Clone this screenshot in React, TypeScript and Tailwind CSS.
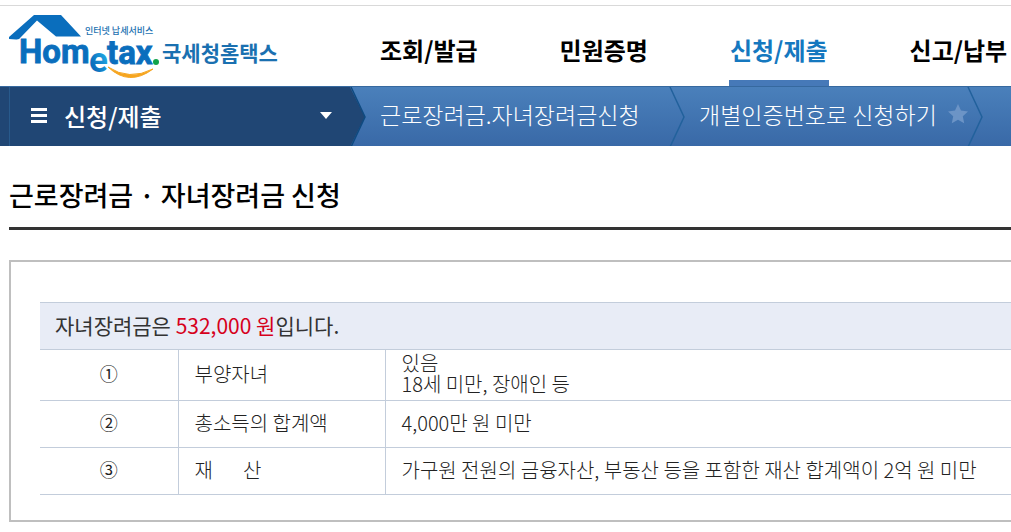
import { ReactNode } from "react";

type MenuItem = {
  label: string;
  active?: boolean;
};

type ConditionRow = {
  no: string;
  name: ReactNode;
  value: ReactNode;
};

const MENU_ITEMS: MenuItem[] = [
  { label: "조회/발급" },
  { label: "민원증명" },
  { label: "신청/제출", active: true },
  { label: "신고/납부" },
];

const CONDITION_ROWS: ConditionRow[] = [
  {
    no: "①",
    name: "부양자녀",
    value: (
      <>
        있음
        <br />
        18세 미만, 장애인 등
      </>
    ),
  },
  { no: "②", name: "총소득의 합계액", value: "4,000만 원 미만" },
  {
    no: "③",
    name: (
      <span className="flex gap-[30px]">
        <span>재</span>
        <span>산</span>
      </span>
    ),
    value: "가구원 전원의 금융자산, 부동산 등을 포함한 재산 합계액이 2억 원 미만",
  },
];

function Logo() {
  return (
    <svg width="272" height="70" viewBox="8 12 272 70" aria-label="홈택스">
      <defs>
        <linearGradient id="logoE" x1="0" y1="1" x2="1" y2="0">
          <stop offset="0.3" stopColor="#0a6ebd" />
          <stop offset="1" stopColor="#2cc4f4" />
        </linearGradient>
      </defs>
      {/* 지붕 */}
      <path
        d="M9 39 V37 L34 15 H61 L81 36.500 H56 L37 20.500 L21 37 Q19 40 16 39.500 Z"
        fill="#0a6ebd"
      />
      <g fontFamily="Roboto, sans-serif" fontWeight="700" fontSize="33" strokeWidth="0.8">
        <text x="19" y="63" fill="#0a6ebd" stroke="#0a6ebd">
          Hom
        </text>
        <text x="107" y="64" fill="#0a6ebd" stroke="#0a6ebd">
          tax
        </text>
        <text x="89" y="72" fill="url(#logoE)" fontSize="35">
          e
        </text>
      </g>
      <circle cx="156" cy="62" r="3" fill="#12a34a" />
      <path d="M108 67 Q129 87 153 69 Q129 81 108 67 Z" fill="#f6a51f" stroke="#f6a51f" />
      <g fontFamily="'Noto Sans CJK KR', sans-serif" fontWeight="700" fill="#1a70b0">
        <text x="85" y="34" fontSize="9" fontWeight="500">
          인터넷 납세서비스
        </text>
        <text x="162" y="61" fontSize="21">
          국세청홈택스
        </text>
      </g>
    </svg>
  );
}

function Chevron() {
  return (
    <svg className="h-[60px] w-4 shrink-0" viewBox="0 0 16 60" fill="none">
      <path d="M1 0 L15 30 L1 60" stroke="#22619c" strokeWidth="1.5" />
    </svg>
  );
}

function Header() {
  return (
    <header className="flex h-[86px] overflow-hidden border-t-[5px] border-white">
      <div className="flex flex-1 border-t border-[#d9d9d9]">
        <a href="#" className="w-[379px] shrink-0 pt-[6px] pl-2">
          <Logo />
        </a>
        <nav className="flex gap-20">
          {MENU_ITEMS.map((item) => (
            <a
              key={item.label}
              href="#"
              className={
                item.active
                  ? "border-b-[6px] border-[#4679b8] px-px pt-7 text-2xl font-bold whitespace-nowrap text-[#1578bf]"
                  : "px-px pt-7 text-2xl font-bold whitespace-nowrap text-black"
              }
            >
              {item.label}
            </a>
          ))}
        </nav>
      </div>
    </header>
  );
}

function Breadcrumb() {
  return (
    <div className="flex h-[60px] overflow-hidden border-t border-[#36699f] bg-linear-to-b from-[#4a80bb] to-[#3969a7] text-white">
      <div className="w-[9px] shrink-0 bg-[#204674]" />
      <button
        type="button"
        className="flex w-[341px] shrink-0 items-center border-l border-[#285a8c] bg-[#204674] pr-[18px] pb-[2px] pl-[21px] text-2xl"
      >
        <svg className="mr-[17px] h-4 w-4" viewBox="0 0 16 16" fill="#fff">
          <path d="M0 0h16v3H0zM0 6h16v3H0zM0 12h16v3H0z" />
        </svg>
        <span className="font-medium">신청/제출</span>
        <svg className="ml-auto h-[7px] w-3" viewBox="0 0 12 7" fill="#fff">
          <path d="M0 0h12L6 7z" />
        </svg>
      </button>
      <svg className="h-[60px] w-4 shrink-0" viewBox="0 0 16 60">
        <path d="M0 0 L15 30 L0 60 Z" fill="#204674" />
        <path d="M1 0 L15 30 L1 60" fill="none" stroke="#0f4a80" strokeWidth="1.5" />
      </svg>
      <a
        href="#"
        className="flex w-[303px] shrink-0 items-center pb-[5px] pl-[14px] text-[23px] font-light whitespace-nowrap"
      >
        근로장려금.자녀장려금신청
      </a>
      <Chevron />
      <div className="flex w-[282px] shrink-0 items-center gap-[11px] pb-[5px] pl-[14px] text-[23px] font-light whitespace-nowrap">
        <a href="#">개별인증번호로 신청하기</a>
        <button type="button" aria-label="즐겨찾기">
          <svg className="h-5 w-5" viewBox="0 0 20 20" fill="#6c94c6">
            <path d="M10 0l3 6.600 7 .8-5.200 4.800 1.400 7L10 15.800 3.800 19.200l1.400-7L0 7.400l7-.8z" />
          </svg>
        </button>
      </div>
      <Chevron />
    </div>
  );
}

export default function App() {
  return (
    <div className="overflow-hidden bg-white font-['Noto_Sans_CJK_KR',sans-serif] text-black">
      <Header />
      <Breadcrumb />
      <main className="pl-[9px]">
        <h1 className="border-b-[3px] border-[#333] pt-[29px] pb-3 text-[27px] leading-10 font-medium">
          근로장려금 · 자녀장려금 신청
        </h1>
        <section className="mt-[30px] border-2 border-r-0 border-[#bfbfbf] pt-10 pb-[25px] pl-[29px]">
          <table className="w-full border-collapse text-left text-xl leading-[21px] font-light text-[#222]">
            <thead>
              <tr className="h-[47px] border-y border-[#c3cddb] bg-[#e8ecf6]">
                <th colSpan={3} className="pb-[2px] pl-[15px] text-[21px] font-normal text-[#333]">
                  자녀장려금은 <span className="text-[#d6001c]">532,000 원</span>
                  입니다.
                </th>
              </tr>
            </thead>
            <tbody>
              {CONDITION_ROWS.map((row) => (
                <tr key={row.no} className="h-[47px] border-b border-[#c3cddb]">
                  <td className="w-[138px] border-r border-[#c3cddb] pb-1 text-center text-lg leading-[21px] font-normal">
                    {row.no}
                  </td>
                  <td className="w-[207px] border-r border-[#c3cddb] pb-1 pl-4">
                    {row.name}
                  </td>
                  <td className="pt-[2px] pb-[6px] pl-4 whitespace-nowrap">
                    {row.value}
                  </td>
                </tr>
              ))}
            </tbody>
          </table>
        </section>
      </main>
    </div>
  );
}
